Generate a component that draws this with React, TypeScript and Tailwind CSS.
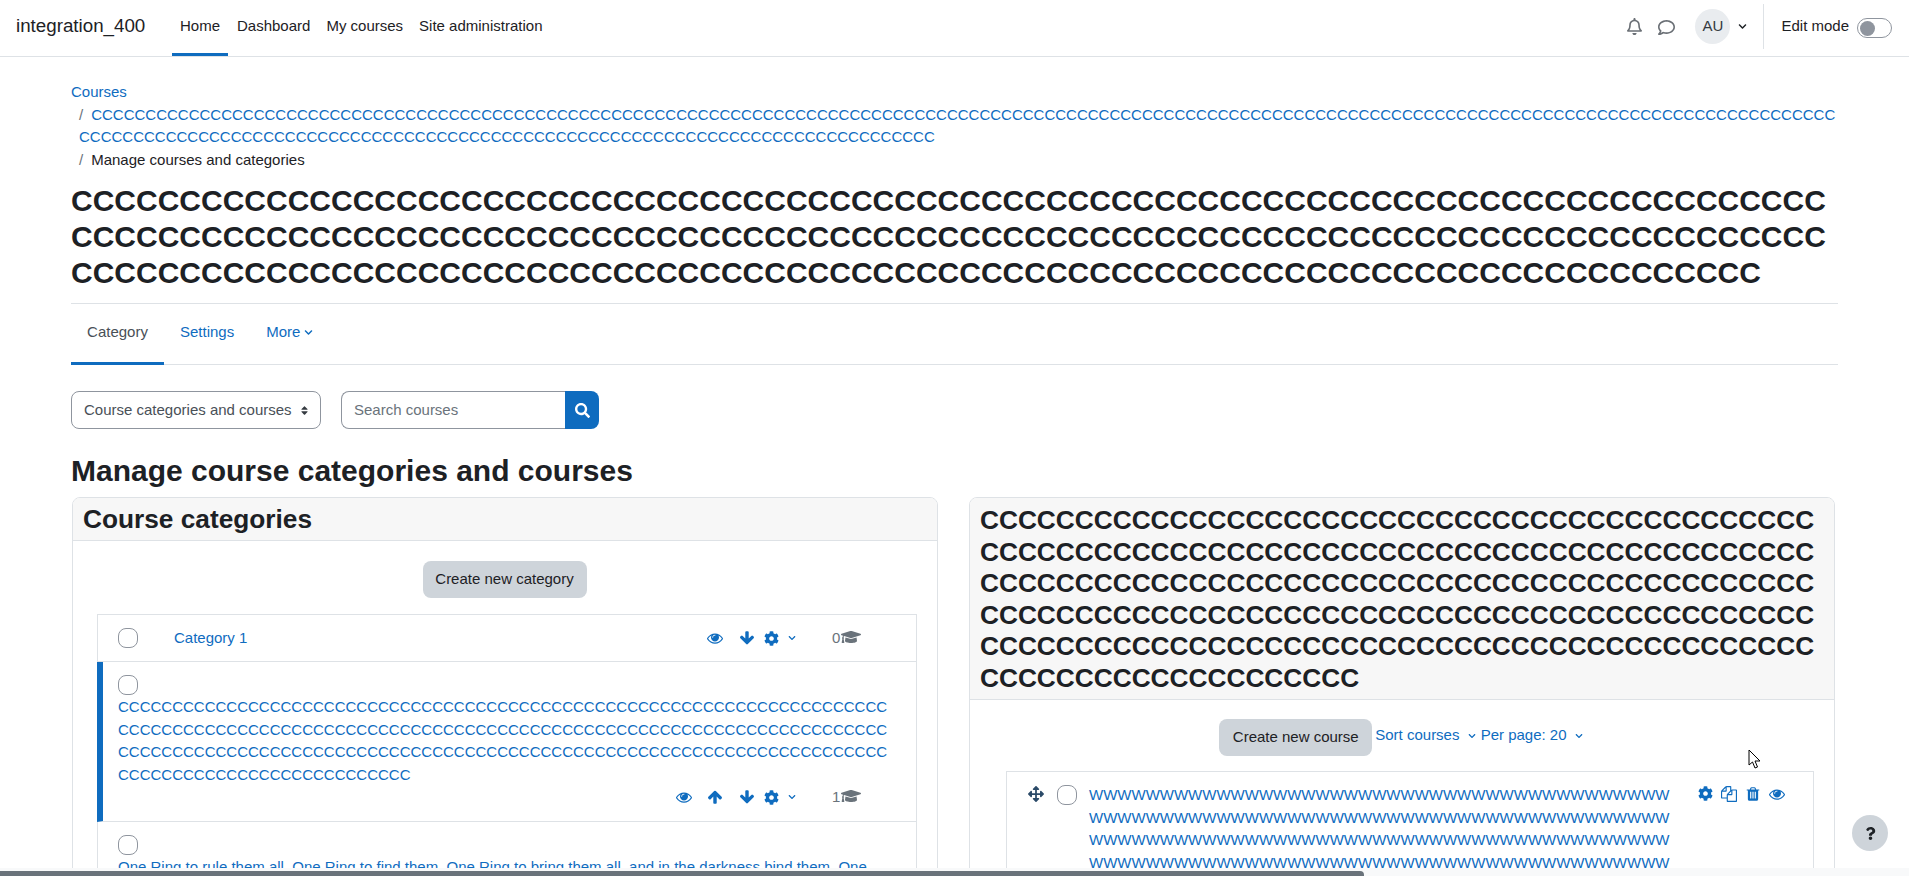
import React from "react";
import { FaRegBell, FaRegComment, FaChevronDown, FaSearch, FaCog, FaGraduationCap, FaArrowsAlt, FaSort, FaQuestion } from "react-icons/fa";

const C240 = "C".repeat(240);
const W = "W".repeat(240);
const RING = "One Ring to rule them all, One Ring to find them, One Ring to bring them all, and in the darkness bind them. One Ring to rule them all, One Ring to find them, One Ring to bring them all, and in the darkness bind them.";

const PATHS = {
  eye: "M1664 960q-152-236-381-353 61 104 61 225 0 185-131.5 316.5t-316.5 131.5-316.5-131.5-131.5-316.5q0-121 61-225-229 117-381 353 133 205 333.5 326.5t434.5 121.5 434.5-121.5 333.5-326.5zm-720-384q0-20-14-34t-34-14q-125 0-214.5 89.5t-89.5 214.5q0 20 14 34t34 14 34-14 14-34q0-86 61-147t147-61q20 0 34-14t14-34zm848 384q0 34-20 69-140 230-376.5 368.5t-499.5 138.5-499.5-139-376.5-368q-20-35-20-69t20-69q140-229 376.5-368t499.5-139 499.5 139 376.5 368q20 35 20 69z",
  down: "M1675 832q0 53-37 90l-651 652q-39 37-91 37-53 0-90-37l-651-652q-38-36-38-90 0-53 38-91l74-75q39-37 91-37 53 0 90 37l294 294v-704q0-52 38-90t90-38h128q52 0 90 38t38 90v704l294-294q37-37 90-37 52 0 91 37l75 75q37 39 37 91z",
  up: "M1675 971q0 51-37 90l-75 75q-38 38-91 38-54 0-90-38l-294-293v704q0 52-37.5 84.5t-90.5 32.5h-128q-53 0-90.5-32.5t-37.5-84.5v-704l-294 293q-36 38-90 38t-90-38l-75-75q-38-38-38-90 0-53 38-91l651-651q35-37 90-37 54 0 91 37l651 651q37 39 37 91z",
  files: "M1696 384q40 0 68 28t28 68v1216q0 40-28 68t-68 28h-960q-40 0-68-28t-28-68v-288h-544q-40 0-68-28t-28-68v-672q0-40 20-88t48-76l408-408q28-28 76-48t88-20h416q40 0 68 28t28 68v328q68-40 128-40h416zm-544 213l-299 299h299v-299zm-640-384l-299 299h299v-299zm196 647l316-316v-416h-384v416q0 40-28 68t-68 28h-416v640h512v-256q0-40 20-88t48-76zm956 804v-1152h-384v416q0 40-28 68t-68 28h-416v640h896z",
  trash: "M704 1376v-704q0-14-9-23t-23-9h-64q-14 0-23 9t-9 23v704q0 14 9 23t23 9h64q14 0 23-9t9-23zm256 0v-704q0-14-9-23t-23-9h-64q-14 0-23 9t-9 23v704q0 14 9 23t23 9h64q14 0 23-9t9-23zm256 0v-704q0-14-9-23t-23-9h-64q-14 0-23 9t-9 23v704q0 14 9 23t23 9h64q14 0 23-9t9-23zm-544-992h448l-48-117q-7-9-17-11h-317q-10 2-17 11zm928 32v64q0 14-9 23t-23 9h-96v948q0 83-47 143.5t-113 60.5h-832q-66 0-113-58.5t-47-141.5v-952h-96q-14 0-23-9t-9-23v-64q0-14 9-23t23-9h309l70-167q15-37 54-63t79-26h320q40 0 79 26t54 63l70 167h309q14 0 23 9t9 23z",
};

function Fa4({ name, className }: { name: keyof typeof PATHS; className?: string }) {
  return (
    <svg viewBox="0 0 1792 1792" width="16" height="16" fill="currentColor" className={className}>
      <path d={PATHS[name]} />
    </svg>
  );
}

function Check() {
  return <span className="block w-5 h-5 rounded-[8px] border border-[#8f959e] bg-white shrink-0" />;
}

function Chevron({ className }: { className?: string }) {
  return <FaChevronDown className={"inline-block text-[8px] " + (className ?? "")} />;
}

function Cap({ n }: { n: string }) {
  return (
    <>
      <span className="absolute left-[734px] top-0 h-full flex items-center text-[#6a737b]">{n}</span>
      <span className="absolute left-[743px] top-0 h-full flex items-center text-[#6a737b] pb-[3px]">
        <FaGraduationCap className="text-[20px]" />
      </span>
    </>
  );
}

function Actions({ up }: { up?: boolean }) {
  return (
    <>
      <span className={"absolute top-0 h-full flex items-center text-[#0f6cbf] " + (up ? "left-[578px]" : "left-[609px]")}><Fa4 name="eye" /></span>
      {up ? <span className="absolute top-0 h-full flex items-center left-[609px] text-[#0f6cbf]"><Fa4 name="up" /></span> : null}
      <span className="absolute top-0 h-full flex items-center left-[641px] text-[#0f6cbf]"><Fa4 name="down" /></span>
      <span className="absolute top-0 h-full flex items-center left-[666px] text-[#0f6cbf] text-[15px]"><FaCog /></span>
      <span className="absolute top-0 h-full flex items-center left-[690px] text-[#0f6cbf]"><Chevron /></span>
    </>
  );
}

export default function App() {
  return (
    <div className="relative h-[876px] w-full overflow-hidden bg-white text-[15px] leading-[22.5px] text-[#1d2125] font-['Liberation_Sans',Arial,sans-serif]">
      <nav className="h-[57px] border-b border-[#dee2e6] bg-white flex items-stretch">
        <div className="pl-[16px] w-[172px] flex items-center text-[18.75px] pb-[3px]">integration_400</div>
        <div className="flex items-stretch">
          <div className="relative px-2 w-[56px] flex items-center justify-center pb-[1px] border-b-[3px] border-[#0f6cbf]">Home</div>
          <div className="flex items-center gap-4 pb-[4px] pl-[8px] ml-[1px]">
            <span>Dashboard</span>
            <span>My courses</span>
            <span>Site administration</span>
          </div>
        </div>
        <div className="ml-auto flex items-center pb-[3px]">
          <FaRegBell className="text-[17px] text-[#6a6f75]" />
          <FaRegComment className="text-[17px] text-[#6a6f75] ml-[15px] mt-[2px]" />
          <div className="ml-[20px] w-[35px] h-[35px] rounded-full bg-[#e9ecef] flex items-center justify-center text-[#343a40]">AU</div>
          <FaChevronDown className="ml-[8px] text-[9px] text-[#1d2125]" />
          <div className="ml-[16px] w-px h-[45px] bg-[#dee2e6]" />
          <span className="ml-[17px]">Edit mode</span>
          <div className="ml-[8px] mr-[17px] mt-[3px] w-[35px] h-[20px] rounded-full border border-[#8f959e] bg-white flex items-center pl-[2px]">
            <span className="block w-[15px] h-[15px] rounded-full bg-[#8f959e]" />
          </div>
        </div>
      </nav>

      <main className="px-[71px] pt-[24px]">
        <div className="w-[1766px]">
          <div className="text-[#0f6cbf]">Courses</div>
          <div className="pl-[8px] break-all">
            <span className="text-[#6a737b] pr-[8px]">/</span>
            <span className="text-[#0f6cbf]">{C240}</span>
          </div>
          <div className="pl-[8px]">
            <span className="text-[#6a737b] pr-[8px]">/</span>
            <span>Manage courses and categories</span>
          </div>
          <h1 className="mt-[12px] text-[30px] leading-[36px] font-bold break-all">{C240}</h1>
        </div>

        <div className="mt-[12px] border-t border-[#dee2e6] h-[62px] border-b flex items-stretch">
          <div className="w-[93px] flex items-center justify-center border-b-[3px] border-[#0f6cbf] text-[#495057] -mb-px pb-[2px]">Category</div>
          <div className="ml-[16px] flex items-center text-[#0f6cbf] pb-[3px]">Settings</div>
          <div className="ml-[32px] flex items-center gap-[4px] text-[#0f6cbf] pb-[3px]">More <Chevron className="text-[9px]" /></div>
        </div>

        <div className="mt-[26px] flex items-stretch h-[38px]">
          <div className="w-[250px] rounded-lg border border-[#8f959e] flex items-center pl-[12px] text-[#495057]">
            <span>Course categories and courses</span>
            <FaSort className="ml-[7px] text-[11px] text-[#343a40]" />
          </div>
          <div className="ml-[20px] w-[258px] flex">
            <div className="w-[224px] rounded-l-lg border border-[#8f959e] border-r-0 flex items-center pl-[12px] text-[#6a737b] pt-[1px]">Search courses</div>
            <div className="w-[34px] rounded-r-lg bg-[#0f6cbf] flex items-center justify-center text-white text-[15px]"><FaSearch /></div>
          </div>
        </div>

        <h2 className="mt-[24px] text-[30px] leading-[36px] font-bold">Manage course categories and courses</h2>

        <div className="mt-[8px] grid grid-cols-[866px_866px] gap-[31px] ml-[1px] items-start">
          <section className="border border-[#dee2e6] rounded-lg overflow-hidden">
            <div className="h-[43px] bg-[#f7f7f7] border-b border-[#dee2e6] pl-[10px] pt-[1px] flex items-center text-[26.25px] leading-[31.5px] font-bold">Course categories</div>
            <div className="pl-[24px] pr-[20px] pt-[20px] pb-[24px]">
              <div className="flex justify-center pr-[5px]">
                <button className="h-[37px] w-[164px] rounded-lg bg-[#ced4da] text-[#1d2125]">Create new category</button>
              </div>
              <div className="mt-[16px] border border-[#dee2e6]">
                <div className="relative h-[47px] border-b border-[#dee2e6] flex items-center pl-[20px]">
                  <Check />
                  <a className="ml-[36px] text-[#0f6cbf]">Category 1</a>
                  <Actions />
                  <Cap n="0" />
                </div>
                <div className="relative h-[160px] border-b border-[#dee2e6] -ml-px border-l-[6px] border-l-[#0f6cbf] pl-[15px] pt-[13px]">
                  <Check />
                  <a className="block mt-[1px] w-[770px] text-[#0f6cbf] break-all">{C240}</a>
                  <div className="absolute left-0 right-0 bottom-0 h-[48px]">
                    <div className="relative h-full -ml-[5px]">
                      <Actions up />
                      <Cap n="1" />
                    </div>
                  </div>
                </div>
                <div className="pl-[20px] pt-[13px]">
                  <Check />
                  <a className="block mt-[1px] text-[#0f6cbf] w-[770px]">{RING}</a>
                </div>
              </div>
            </div>
          </section>

          <section className="border border-[#dee2e6] rounded-lg overflow-hidden">
            <div className="bg-[#f7f7f7] border-b border-[#dee2e6] px-[10px] pt-[7px] pb-[5px] text-[26.25px] leading-[31.5px] font-bold break-all">{C240}</div>
            <div className="pl-[36px] pr-[20px] pt-[19px]">
              <div className="flex justify-center items-start pr-[18px]">
                <button className="h-[37px] w-[153px] rounded-lg bg-[#ced4da] text-[#1d2125]">Create new course</button>
                <span className="ml-[3px] mt-[5px] text-[#0f6cbf] whitespace-nowrap">Sort courses <Chevron className="ml-[4px]" /></span>
                <span className="ml-[5px] mt-[5px] text-[#0f6cbf] whitespace-nowrap">Per page: 20 <Chevron className="ml-[4px]" /></span>
              </div>
              <div className="relative mt-[15px] border border-[#dee2e6] h-[300px]">
                <FaArrowsAlt className="absolute left-[21px] top-[14px] text-[16px] text-[#2b4a68]" />
                <div className="absolute left-[50px] top-[13px]"><Check /></div>
                <a className="absolute left-[82px] top-[12px] w-[582px] text-[#0f6cbf] break-all">{W}</a>
                <FaCog className="absolute left-[691px] top-[14px] text-[15px] text-[#0f6cbf]" />
                <span className="absolute left-[714px] top-[14px] text-[#0f6cbf]"><Fa4 name="files" /></span>
                <span className="absolute left-[738px] top-[14px] text-[#0f6cbf]"><Fa4 name="trash" /></span>
                <span className="absolute left-[762px] top-[14px] text-[#0f6cbf]"><Fa4 name="eye" /></span>
              </div>
            </div>
          </section>
        </div>
      </main>

      <svg className="absolute left-[1748px] top-[749px]" width="13" height="21" viewBox="0 0 13 21">
        <path d="M1 1 L1 16 L4.5 13 L7 19 L9.5 18 L7 12 L12 12 Z" fill="#fff" stroke="#000" strokeWidth="1" />
      </svg>

      <div className="absolute left-[1852px] top-[815px] w-[36px] h-[36px] rounded-full bg-[#ced4da] flex items-center justify-center text-[13px] text-[#1d2125]"><FaQuestion /></div>

      <div className="absolute left-0 right-0 bottom-0 h-[8px] bg-[#f8f9fa]">
        <div className="absolute left-0 bottom-0 w-[1364px] h-[5px] bg-[#6a737b] rounded-tr-[4px]" />
      </div>
    </div>
  );
}
